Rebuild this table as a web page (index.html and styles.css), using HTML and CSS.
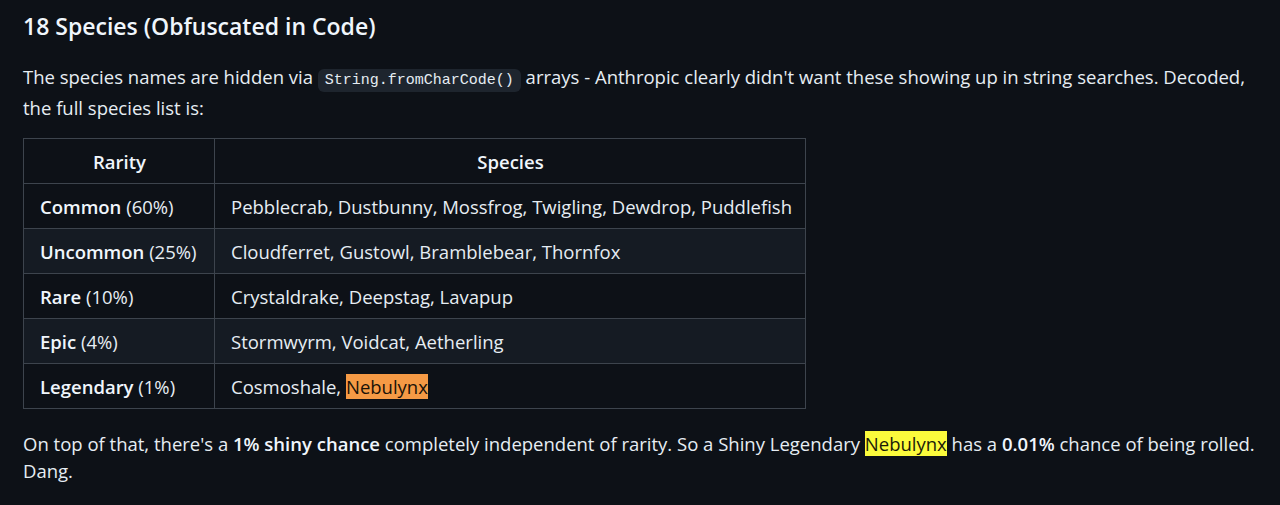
FILE: index.html
```html
<!DOCTYPE html>
<html>
<head>
<meta charset="utf-8">
<link rel="stylesheet" href="styles.css">
</head>
<body>
<article class="md">
  <h3 class="title">18 Species (Obfuscated in Code)</h3>
  <p class="para">The species names are hidden via <code class="code">String.fromCharCode()</code> arrays - Anthropic clearly didn't want these showing up in string searches. Decoded, the full species list is:</p>
  <table class="tbl">
    <colgroup><col class="c1"><col class="c2"></colgroup>
    <thead>
      <tr><th>Rarity</th><th>Species</th></tr>
    </thead>
    <tbody>
      <tr><td><strong>Common</strong> (60%)</td><td>Pebblecrab, Dustbunny, Mossfrog, Twigling, Dewdrop, Puddlefish</td></tr>
      <tr><td><strong>Uncommon</strong> (25%)</td><td>Cloudferret, Gustowl, Bramblebear, Thornfox</td></tr>
      <tr><td><strong>Rare</strong> (10%)</td><td>Crystaldrake, Deepstag, Lavapup</td></tr>
      <tr><td><strong>Epic</strong> (4%)</td><td>Stormwyrm, Voidcat, Aetherling</td></tr>
      <tr><td><strong>Legendary</strong> (1%)</td><td>Cosmoshale, <mark class="hl-active">Nebulynx</mark></td></tr>
    </tbody>
  </table>
  <p class="para after">On top of that, there's a <strong>1% shiny chance</strong> completely independent of rarity. So a Shiny Legendary <mark class="hl">Nebulynx</mark> has a <strong>0.01%</strong> chance of being rolled. Dang.</p>
</article>
</body>
</html>
```
FILE: styles.css
```css
html, body {
  margin: 0;
  padding: 0;
  background: #0d1117;
}
body {
  color: #e6edf3;
  font-family: "Open Sans", "Noto Sans", sans-serif;
  font-size: 18.5px;
  line-height: 27px;
}
.md {
  padding: 12px 23px 0 23px;
}
.title {
  margin: 0 0 23px 0;
  font-size: 23px;
  line-height: 28px;
  font-weight: 600;
  color: #f0f6fc;
}
.para {
  margin: 0 0 17px 0;
  width: 1240px;
}
.para.after {
  margin-top: 21px;
}
.code {
  font-family: "Liberation Mono", "DejaVu Sans Mono", monospace;
  font-size: 15px;
  background: rgba(101, 118, 139, 0.2);
  border-radius: 6px;
  padding: 3px 7px;
}
strong {
  font-weight: 600;
  color: #f0f6fc;
}
.tbl {
  border-collapse: collapse;
  border-spacing: 0;
  table-layout: fixed;
  width: 782px;
}
.c1 { width: 191px; }
.c2 { width: 591px; }
.tbl th, .tbl td {
  border: 1px solid #3d444d;
  height: 45px;
  padding: 0 15px 0 16px;
  box-sizing: border-box;
  text-align: left;
  white-space: nowrap;
  overflow: hidden;
}
.tbl th {
  font-weight: 600;
  text-align: center;
  color: #f0f6fc;
}
.tbl tbody tr:nth-child(2n) {
  background: #151b23;
}
.hl-active {
  background: #f59a45;
  color: #1a1208;
}
.hl {
  background: #fbfb3c;
  color: #1a1a08;
}
```
